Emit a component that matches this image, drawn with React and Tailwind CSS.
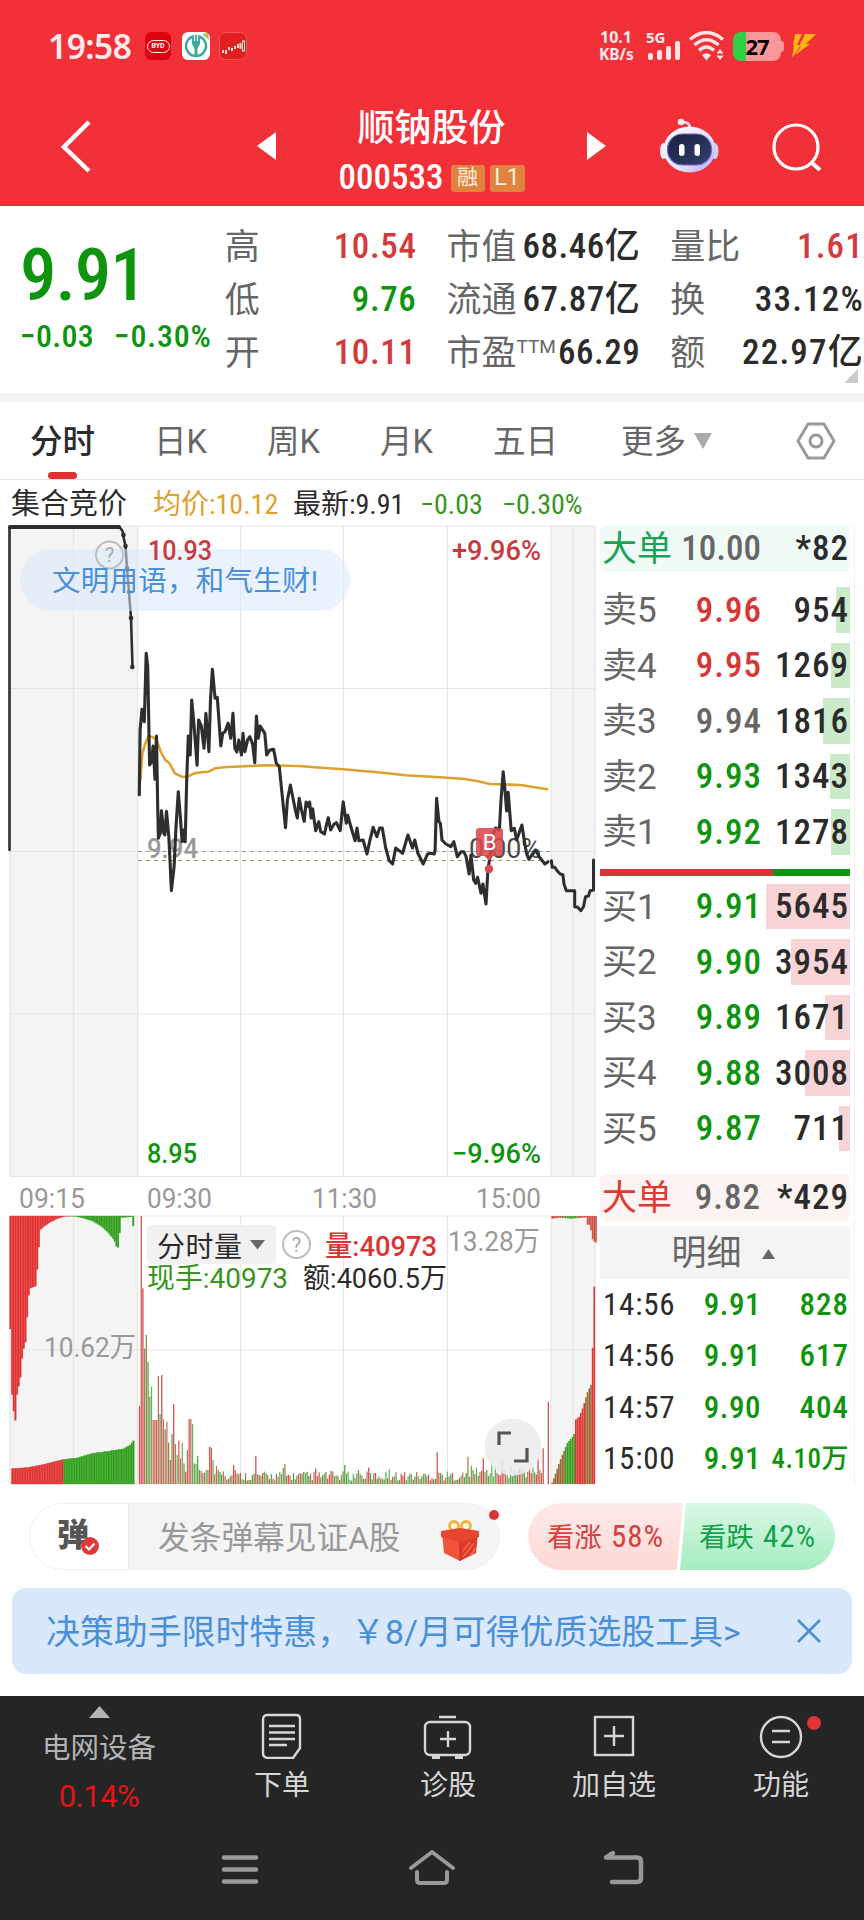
import React from 'react';

// --- DATA ---

const quoteColumns = [
    {
        box: 'w-[192px]',
        spacing: 'tracking-[0.6px]',
        rows: [
            { label: '高', value: '10.54', color: 'text-[#d23a3c]' },
            { label: '低', value: '9.76', color: 'text-[#0f940f]' },
            { label: '开', value: '10.11', color: 'text-[#d23a3c]' },
        ],
    },
    {
        box: 'ml-[30px] w-[194px]',
        spacing: 'tracking-[0.5px]',
        rows: [
            { label: '市值', value: '68.46亿', color: 'text-[#2b2b2b]' },
            { label: '流通', value: '67.87亿', color: 'text-[#2b2b2b]' },
            { label: '市盈', sup: 'TTM', value: '66.29', color: 'text-[#2b2b2b]' },
        ],
    },
    {
        box: 'ml-[30px] w-[194px]',
        spacing: 'tracking-[1.2px]',
        rows: [
            { label: '量比', value: '1.61', color: 'text-[#d23a3c]' },
            { label: '换', value: '33.12%', color: 'text-[#2b2b2b]' },
            { label: '额', value: '22.97亿', color: 'text-[#2b2b2b]' },
        ],
    },
];

const RED = 'text-[#d93534]';
const GREEN = 'text-[#0f940f]';
const GRAY = 'text-[#666]';

const sells = [
    { label: '卖5', price: '9.96', color: RED, amount: '954', bar: 14 },
    { label: '卖4', price: '9.95', color: RED, amount: '1269', bar: 19 },
    { label: '卖3', price: '9.94', color: GRAY, amount: '1816', bar: 27 },
    { label: '卖2', price: '9.93', color: GREEN, amount: '1343', bar: 20 },
    { label: '卖1', price: '9.92', color: GREEN, amount: '1278', bar: 19 },
];

const buys = [
    { label: '买1', price: '9.91', color: GREEN, amount: '5645', bar: 84 },
    { label: '买2', price: '9.90', color: GREEN, amount: '3954', bar: 59 },
    { label: '买3', price: '9.89', color: GREEN, amount: '1671', bar: 25 },
    { label: '买4', price: '9.88', color: GREEN, amount: '3008', bar: 45 },
    { label: '买5', price: '9.87', color: GREEN, amount: '711', bar: 11 },
];

const ticks = [
    { time: '14:56', price: '9.91', amount: '828' },
    { time: '14:56', price: '9.91', amount: '617' },
    { time: '14:57', price: '9.90', amount: '404' },
    { time: '15:00', price: '9.91', amount: '4.10万', small: true },
];

// Chart samples are stored in a 1568-wide space, KX / KY bring them to pixels
const KX = 600 / 1568;
const KY = 1 / 3;

const priceLine = [
    364,524, 366,330, 371,268, 377,305, 382,100, 386,140, 391,435, 396,425, 400,378, 405,478, 409,348, 412,560,
    414,655, 419,640, 422,572, 428,640, 431,645, 435,574, 441,650, 445,740, 448,812, 455,740, 460,620, 466,515,
    472,600, 476,665, 480,630, 484,665, 488,480, 492,348, 497,405, 501,240, 506,300, 515,436, 519,300, 526,318,
    533,385, 538,280, 546,395, 550,240, 555,148, 562,235, 568,232, 577,378, 582,340, 588,335, 596,310, 603,355,
    609,280, 614,385, 619,396, 624,360, 631,405, 635,340, 640,395, 647,360, 653,350, 660,372, 666,428, 670,288,
    675,355, 680,318, 692,340, 697,405, 705,390, 715,388, 722,430, 730,440, 737,520, 746,623, 751,540, 759,495,
    765,530, 771,565, 777,594, 782,535, 788,570, 795,604, 800,546, 807,560, 809,546, 813,594, 817,566, 825,632,
    833,605, 838,635, 848,642, 853,615, 858,593, 864,630, 873,612, 879,608, 889,632, 897,545, 905,610, 909,586,
    918,625, 928,662, 933,624, 938,662, 949,660, 959,702, 966,665, 975,622, 985,650, 992,624, 999,624, 1008,684,
    1017,722, 1026,732, 1034,684, 1052,700, 1066,645, 1078,684, 1084,660, 1092,700, 1106,732, 1117,703, 1124,700,
    1135,702, 1137,690, 1141,535, 1147,605, 1151,610, 1155,660, 1165,672, 1178,680, 1186,665, 1195,710, 1205,695,
    1212,695, 1218,710, 1226,762, 1231,705, 1238,780, 1243,790, 1248,772, 1257,820, 1262,792, 1270,852, 1275,750,
    1290,640, 1295,624, 1305,630, 1309,545, 1315,455, 1320,515, 1324,573, 1328,517, 1336,632, 1344,625, 1350,660,
    1364,615, 1370,660, 1376,700, 1382,718, 1390,705, 1400,690, 1410,712, 1424,732, 1432,725,
];

const averageLine = [
    367,480, 372,400, 380,370, 388,348, 400,352, 410,362, 420,395, 432,420, 443,430, 457,460, 475,470, 490,470,
    508,460, 530,456, 545,455, 562,445, 585,442, 640,439, 700,436, 780,438, 840,443, 897,448, 1000,458, 1060,466,
    1150,472, 1215,477, 1250,484, 1280,492, 1360,495, 1430,508,
];

const closingLine = [
    1441,722, 1443,742, 1450,742, 1456,752, 1464,762, 1471,764, 1474,792, 1480,812, 1502,812, 1502,860, 1510,862,
    1518,872, 1525,860, 1530,830, 1538,828, 1542,812, 1551,810, 1551,720,
];

const toPoints = (list, top) => {
    const out = [];
    for (let i = 0; i < list.length; i += 2) {
        out.push(`${(list[i] * KX).toFixed(1)},${(top + list[i + 1] * KY).toFixed(1)}`);
    }
    return out.join(' ');
};

// Linear interpolation through [x, y] pairs
const sample = (pairs, x) => {
    for (let i = 1; i < pairs.length; i++) {
        const [x0, y0] = pairs[i - 1];
        const [x1, y1] = pairs[i];
        if (x <= x1) return y0 + ((y1 - y0) * (x - x0)) / (x1 - x0 || 1);
    }
    return pairs[pairs.length - 1][1];
};

const auctionTop = [[25, 627], [30, 850], [40, 912], [43, 810], [50, 790], [57, 700], [66, 660], [71, 545], [76, 505], [92, 498], [98, 410], [103, 330], [112, 320], [130, 306], [150, 295], [168, 289], [195, 289], [215, 294], [240, 303], [262, 318], [280, 337], [297, 360], [300, 378], [310, 384], [312, 293], [344, 290], [346, 318], [350, 318]];
const auctionBottom = [[30, 1046], [70, 1043], [110, 1034], [165, 1018], [200, 1014], [240, 1000], [280, 994], [320, 987], [338, 975], [350, 958]];
const closeBottom = [[1441, 1088], [1450, 1060], [1462, 1020], [1480, 970], [1498, 945], [1501, 900], [1512, 890], [1522, 860], [1532, 820], [1544, 790], [1545, 685], [1550, 680], [1551, 500], [1556, 500]];
const closeTop = [[1441, 296], [1460, 293], [1490, 296], [1530, 292], [1534, 318], [1540, 312], [1545, 355], [1553, 368]];

// Minute volume bars: known peaks, the rest is low background turnover
const peaks = {
    0: 858, 1: 288, 2: 505, 3: 685, 4: 645, 5: 725, 6: 830, 7: 800, 8: 900, 9: 900, 10: 900, 11: 768, 12: 882, 13: 765,
    14: 898, 15: 928, 16: 905, 17: 968, 18: 1020, 19: 942, 20: 852, 21: 972, 22: 1005, 23: 962, 24: 1015, 25: 968,
    26: 1030, 27: 1055, 28: 990, 29: 897, 30: 897, 31: 912, 32: 1030, 33: 1032, 34: 1008, 35: 1050, 36: 1052, 37: 1060,
    38: 1058, 39: 1050, 40: 1050, 41: 980, 42: 983, 43: 1020, 44: 1062, 45: 1038, 46: 1050, 47: 1056, 48: 1064, 49: 1054,
    50: 1068, 55: 1035, 56: 1050, 68: 1008, 85: 1032, 84: 1044, 103: 1045, 112: 1052, 120: 1035, 128: 1050, 134: 1043,
    146: 1048, 174: 997, 175: 1058, 192: 1010, 201: 1015, 206: 1030, 212: 1018, 217: 1036, 224: 1050, 233: 1015,
    236: 985, 237: 1092, 238: 1092, 239: 845,
};
const reds = [0, 1, 2, 13, 20, 27, 41, 42, 55, 68, 134, 174, 201, 212, 233, 239];
const barColors = ['#93834a', '#4ba344', '#d9524f', '#8b8a55', '#5fb556', '#c0705c'];

const volumeBars = Array.from({ length: 240 }, (_, i) => {
    const noise = Math.abs(Math.sin(i * 12.9898) * 43758.5453) % 1;
    const base = i > 192 ? 18 + noise * 38 : 10 + noise * 28;
    return {
        x: (363 + i * 4.47) * KX,
        y: 1120 + (peaks[i] ?? 1092 - base) * KY,
        color: reds.includes(i) ? '#d8484a' : barColors[Math.floor(noise * 97) % 6],
    };
});

const stripes = (from, to, pick) => {
    const out = [];
    for (let x = from; x < to; x += 4.4) out.push({ x: x * KX, ...pick(x) });
    return out;
};

const auctionBars = [
    ...stripes(25, 350, (x) => ({ y: 1216, h: (sample(auctionTop, x) - 288) * KY, color: x < 180 ? '#e23232' : '#32a01e' })),
    ...stripes(30, 350, (x) => {
        const y = 1120 + sample(auctionBottom, x) * KY;
        return { y, h: 1484 - y, color: x < 163 ? '#e23232' : '#32a01e' };
    }),
];

const closeBars = [
    ...stripes(1441, 1556, (x) => ({ y: 1216, h: (sample(closeTop, x) - 288) * KY, color: x > 1470 && x < 1510 ? '#4b9a2e' : '#cf4b3f' })),
    ...stripes(1441, 1554, (x) => {
        const y = 1120 + sample(closeBottom, x) * KY;
        let color = '#9a6a35';
        if (x > 1474 && x < 1500) color = '#32a01e';
        if (x >= 1500 && x < 1526) color = '#e23232';
        if (x > 1543) color = '#e23232';
        return { y, h: 1484 - y, color };
    }),
];

// --- ICONS ---

function Triangle({ className, points }) {
    return (
        <svg className={className} viewBox="0 0 20 20" preserveAspectRatio="none" fill="currentColor">
            <polygon points={points} />
        </svg>
    );
}

function Robot() {
    return (
        <svg className="h-[56px] w-[60px]" viewBox="0 0 60 56">
            <defs>
                <linearGradient id="shell" x1="0" y1="0" x2="1" y2="1">
                    <stop offset="0" stopColor="#ffffff" />
                    <stop offset=".6" stopColor="#e6e2fb" />
                    <stop offset="1" stopColor="#a9a4f4" />
                </linearGradient>
                <linearGradient id="visor" x1="0" y1="0" x2="1" y2="1">
                    <stop offset="0" stopColor="#18203f" />
                    <stop offset="1" stopColor="#33406b" />
                </linearGradient>
            </defs>
            <path d="M22 4.500 Q31 3 31 11" stroke="#f6dbe6" strokeWidth="2.500" fill="none" />
            <circle cx="22" cy="4" r="3.300" fill="#fde8ee" />
            <ellipse cx="4.500" cy="33" rx="3.500" ry="8" fill="#efeafd" />
            <ellipse cx="56" cy="33" rx="3.500" ry="8" fill="#d3cdf6" />
            <ellipse cx="30.500" cy="31.500" rx="26" ry="23" fill="url(#shell)" />
            <rect x="8.500" y="16" width="44" height="31" rx="15" fill="url(#visor)" stroke="#7a5fe0" strokeWidth="1.200" />
            <rect x="20" y="26" width="5.500" height="12" rx="2.700" fill="#fff" />
            <rect x="35.500" y="26" width="5.500" height="12" rx="2.700" fill="#fff" />
        </svg>
    );
}

function Wifi() {
    return (
        <svg className="h-[30px] w-[36px]" viewBox="0 0 36 30" fill="none" stroke="#ffe4e6" strokeWidth="3.400">
            <path d="M1 8.500 Q17.500 -5.500 34 8.500" />
            <path d="M5.500 14 Q17.500 3.500 29.500 14" />
            <path d="M10 19.500 Q17.500 12.500 25 19.500" />
            <path d="M13 24 Q17.500 20.500 22 24 L17.500 29.500 Z" fill="#ffe4e6" stroke="none" />
            <path d="M27.500 22.500 L31 18 L34.500 22.500 Z M27.500 24.500 L31 29 L34.500 24.500 Z" fill="#ffe4e6" stroke="none" />
        </svg>
    );
}

function Gift() {
    return (
        <svg className="h-[42px] w-[40px]" viewBox="0 0 40 42">
            <circle cx="14" cy="7" r="4.500" fill="#fff6e0" stroke="#f2b23c" strokeWidth="2.800" />
            <circle cx="26" cy="7" r="4.500" fill="#fff6e0" stroke="#f2b23c" strokeWidth="2.800" />
            <polygon points="2,14 20,20 20,42 4,34" fill="#f0553c" />
            <polygon points="38,14 20,20 20,42 36,34" fill="#dc3a2c" />
            <polygon points="1,12 20,9 39,12 39,18 20,23 1,18" fill="#e8452f" />
            <path d="M20 23 V42" stroke="#c32e22" />
            <path d="M23 38 L34 24 M23 32 L30 23 M30 37 L36 29" stroke="#f36b4e" strokeWidth="1.500" />
        </svg>
    );
}

// --- SECTIONS ---

function StatusBar() {
    return (
        <div className="flex h-[92px] items-center pr-[48px] pl-[48px] text-[#ffe9ea]">
            <div className="w-[97px] font-['Noto_Sans'] text-[33.500px] font-semibold tracking-[-0.500px]">19:58</div>
            <div className="flex h-[28px] w-[26px] items-center justify-center rounded-[6px] bg-[#e1000f]">
                <div className="flex h-[13px] w-[23px] items-center justify-center rounded-full border border-white text-[7px] font-bold text-white">BYD</div>
            </div>
            <svg className="ml-[11px] h-[28px] w-[28px]" viewBox="0 0 28 28">
                <rect width="28" height="28" rx="6" fill="#fff" />
                <path d="M20 2 L26 1 L27 8 Z" fill="#a7c94a" />
                <circle cx="14" cy="14" r="10" fill="none" stroke="#3fa9a0" strokeWidth="2.500" />
                <path d="M14 13 V25" stroke="#3fa9a0" strokeWidth="3" />
                <path d="M10 4 H18 V12 L15 17 H13 L10 12 Z" fill="#3fa9a0" />
                <path d="M12.500 3 V9 M15.500 3 V9" stroke="#fff" strokeWidth="1.200" />
            </svg>
            <svg className="ml-[9px] h-[28px] w-[28px]" viewBox="0 0 28 28">
                <rect x=".5" y=".5" width="27" height="27" rx="6" fill="#e0201f" stroke="#f0565a" />
                <path d="M4 18 V21 M7 18 V22 M10 15 V18 M13 16 V19 M16 14 V17 M19 12 V16 M21.500 11 V17" stroke="#ffd9d0" strokeWidth="2" />
                <rect x="23.500" y="9" width="2" height="10" fill="none" stroke="#ffd9d0" />
            </svg>
            <div className="ml-auto flex h-[30px] items-center">
                <div className="w-[47px] font-['Noto_Sans'] text-[16px] leading-[17px] font-bold">
                    <div className="pl-[1px]">10.1</div>
                    <div className="text-[15.500px]">KB/s</div>
                </div>
                <div className="relative h-[30px] w-[36px]">
                    <div className="absolute top-0 left-0 font-['Noto_Sans'] text-[15px] leading-[13px] font-bold">5G</div>
                    <svg className="h-[30px] w-[36px]" viewBox="0 0 36 30" fill="#ffe4e6">
                        <rect x="2" y="22" width="5" height="7" rx="2" />
                        <rect x="11" y="19" width="5" height="10" rx="2" />
                        <rect x="20" y="15" width="5" height="14" rx="2" />
                        <rect x="29" y="10" width="5" height="19" rx="2" />
                    </svg>
                </div>
                <div className="ml-[7px]">
                    <Wifi />
                </div>
                <div className="ml-[8px] flex h-[29px] w-[48px] items-center justify-center overflow-hidden rounded-[8px] bg-linear-to-r from-[#2fd046] from-27% to-[#fb979b] to-27% font-['Noto_Sans'] text-[22px] font-bold tracking-[-1px] text-black">
                    27
                </div>
                <div className="h-[11px] w-[3px] rounded-r-full bg-[#fb979b]" />
                <svg className="ml-[7px] h-[25px] w-[25px]" viewBox="0 0 25 25" fill="#ffb51a">
                    <path d="M4 0 H11 L6 11 L10 11 L1 24 L3 12 L2 11 Z" />
                    <path d="M14 0 H25 L15 10 H19 L4 21 L10 12.500 H8 Z" />
                </svg>
            </div>
        </div>
    );
}

function TitleBar() {
    return (
        <div className="flex h-[114px] items-center border-b-2 border-[#d8343a] pb-[4px] text-white">
            <svg className="ml-[60px] h-[54px] w-[32px]" viewBox="0 0 32 54" fill="none" stroke="#fff" strokeWidth="4.500">
                <path d="M29 3 L4 28 L29 52" />
            </svg>
            <Triangle className="ml-[165px] h-[28px] w-[19px]" points="20,0 20,20 0,10" />
            <div className="flex w-[311px] flex-col items-center pt-[10px]">
                <div className="text-[37px] leading-[44px] font-medium">顺钠股份</div>
                <div className="mt-[10px] flex items-center">
                    <span className="w-[112px] text-[35px] leading-[34px] font-medium font-stretch-[75%]">000533</span>
                    <span className="flex h-[27px] w-[34px] items-center justify-center rounded-[3px] bg-[#e0833f] text-[21px] text-[#fff0dc]">融</span>
                    <span className="ml-[5px] flex h-[27px] w-[35px] items-center justify-center rounded-[3px] bg-[#e0833f] text-[23px] text-[#fff0dc]">L1</span>
                </div>
            </div>
            <Triangle className="h-[28px] w-[19px]" points="0,0 20,10 0,20" />
            <div className="ml-[53px]">
                <Robot />
            </div>
            <svg className="ml-[52px] h-[52px] w-[52px]" viewBox="0 0 52 52" fill="none" stroke="#fff" strokeWidth="3.200">
                <circle cx="25" cy="27" r="22" />
                <path d="M40 42 L49 50" strokeWidth="4" />
            </svg>
        </div>
    );
}

function QuotePanel() {
    return (
        <section className="relative flex h-[187px] pt-[14px]">
            <div className="w-[225px] pl-[20px] font-medium text-[#0f940f] font-stretch-[75%]">
                <div className="mt-[19px] text-[73px] leading-[72px] tracking-[-1px]">9.91</div>
                <div className="mt-[5px] flex text-[32px] leading-[40px] whitespace-nowrap">
                    <span className="w-[94px] tracking-[0.3px]">−0.03</span>
                    <span className="tracking-[0.8px]">−0.30%</span>
                </div>
            </div>
            {quoteColumns.map((col, i) => (
                <div key={i} className={col.box}>
                    {col.rows.map((row) => (
                        <div key={row.label} className="flex h-[53px] items-center justify-between whitespace-nowrap">
                            <span className="flex pt-[4px] text-[35px] text-[#666]">
                                {row.label}
                                {row.sup && <sup className="top-[4px] text-[19px] leading-[30px]">{row.sup}</sup>}
                            </span>
                            <span className={`pt-[1px] text-[35px] font-medium font-stretch-[75%] ${col.spacing} ${row.color}`}>{row.value}</span>
                        </div>
                    ))}
                </div>
            ))}
            <Triangle className="absolute right-[6px] bottom-[10px] h-[14px] w-[14px] text-[#ccc]" points="20,0 20,20 0,20" />
        </section>
    );
}

function ChartTabs() {
    return (
        <nav className="flex h-[78px] items-center border-b border-[#e4e4e4] pl-[30px] text-[32.500px] text-[#666]">
            <div className="relative flex h-full w-[124px] items-center pt-[4px] font-medium text-[#2b2b2b]">
                分时
                <span className="absolute bottom-0 left-[18px] h-[7px] w-[29px] rounded-full bg-[#df3032]" />
            </div>
            <div className="w-[113px] pt-[4px]">日K</div>
            <div className="w-[113px] pt-[4px]">周K</div>
            <div className="w-[113px] pt-[4px]">月K</div>
            <div className="w-[128px] pt-[4px]">五日</div>
            <div className="w-[73px] pt-[4px]">更多</div>
            <Triangle className="h-[16px] w-[18px] text-[#aaa]" points="0,0 20,0 10,20" />
            <svg className="ml-[84px] h-[38px] w-[40px]" viewBox="0 0 40 38" fill="none" stroke="#999" strokeWidth="3">
                <path d="M12 2 H28 L38 19 L28 36 H12 L2 19 Z" strokeLinejoin="round" />
                <circle cx="20" cy="19" r="6" />
            </svg>
        </nav>
    );
}

function InfoLine() {
    return (
        <div className="flex h-[46px] items-center pt-[3px] pl-[11px] text-[28px] whitespace-nowrap text-[#2b2b2b] font-stretch-[75%]">
            <span className="w-[142px] text-[29px]">集合竞价</span>
            <span className="w-[140px] text-[#dfa02c]">均价:10.12</span>
            <span className="w-[127px]">最新:9.91</span>
            <span className="w-[82px] text-[#35951d]">−0.03</span>
            <span className="text-[#35951d]">−0.30%</span>
        </div>
    );
}

function Charts() {
    return (
        <svg className="h-[962px] w-[600px] shrink-0" viewBox="0 525 600 962" fontFamily="Roboto, 'Noto Sans CJK SC', sans-serif">
            {/* auction areas */}
            <rect x="10" y="526" width="128" height="650" fill="#f4f4f4" />
            <rect x="551" y="526" width="44" height="650" fill="#f4f4f4" />
            <rect x="10" y="1216" width="128" height="268" fill="#f4f4f4" />
            <rect x="551" y="1216" width="44" height="268" fill="#f4f4f4" />
            {/* grid */}
            <g stroke="#e4e4e4" strokeWidth="1.200">
                {[10, 73.5, 137.5, 240.5, 343.5, 447.5, 551, 573, 595].map((x) => (
                    <path key={x} d={`M${x} 526 V1176 M${x} 1216 V1484`} />
                ))}
                {[526, 688.5, 851.5, 1014, 1176.5, 1216, 1350, 1484].map((y) => (
                    <path key={y} d={`M10 ${y} H595`} />
                ))}
            </g>
            <path d="M138 851.500 H551" stroke="#999" strokeWidth="1.200" strokeDasharray="4 4" />
            <path d="M138 860.500 H545" stroke="#a8925a" strokeWidth="1.200" strokeDasharray="4 4" />

            <g fontSize="28">
                <text x="147" y="858" fill="#999" fontWeight="500" textLength="51" lengthAdjust="spacingAndGlyphs">9.94</text>
                <text x="469" y="858" fill="#4a4a4a" textLength="72" lengthAdjust="spacingAndGlyphs">0.00%</text>
            </g>

            {/* price lines */}
            <g fill="none" strokeLinejoin="round" strokeLinecap="round">
                <polyline points={toPoints(averageLine, 620)} stroke="#dba22f" strokeWidth="2.600" />
                <polyline points="9.500,850 9.500,527 119.500,527 122.500,531 123.500,537 125.500,546 127,568 129,592 131,618 132.500,667" stroke="#2e2e2e" strokeWidth="2.600" />
                <path d="M10 527 H119" stroke="#2e2e2e" strokeWidth="4" />
                <polyline points={toPoints(priceLine, 620)} stroke="#2e2e2e" strokeWidth="3.100" />
                <polyline points={toPoints(closingLine, 620)} stroke="#2e2e2e" strokeWidth="3" />
            </g>
            {[[123.5, 535], [125.5, 546], [127, 568], [129, 592], [131, 618], [132.3, 667]].map(([x, y]) => (
                <circle key={y} cx={x} cy={y} r="2.300" fill="#2e2e2e" />
            ))}

            {/* buy marker */}
            <rect x="476" y="828" width="27" height="28" rx="3" fill="#d9494c" opacity=".88" />
            <path d="M484 855 H494 L489 861 Z" fill="#d9494c" />
            <circle cx="489" cy="869" r="4.200" fill="#d9494c" />
            <text x="489.500" y="850" fontSize="22" fill="#fff" textAnchor="middle">B</text>

            {/* notice bubble */}
            <rect x="20" y="549" width="330" height="62" rx="31" fill="#d9e8fd" opacity=".55" />
            <circle cx="109.500" cy="555" r="13.500" fill="none" stroke="#bdbdc2" strokeWidth="2" />
            <text x="109.500" y="562" fontSize="20" fill="#aaa" textAnchor="middle">?</text>
            <text x="52" y="591" fontSize="28.500" fill="#4a90d9" textLength="266">文明用语，和气生财!</text>

            {/* axis labels */}
            <g fontSize="28" fontWeight="500">
                <text x="148" y="560" fill="#c93a3c" textLength="64" lengthAdjust="spacingAndGlyphs">10.93</text>
                <text x="452" y="560" fill="#c93a3c" textLength="89" lengthAdjust="spacingAndGlyphs">+9.96%</text>
                <text x="147" y="1163" fill="#0f940f" textLength="50" lengthAdjust="spacingAndGlyphs">8.95</text>
                <text x="452" y="1163" fill="#0f940f" textLength="89" lengthAdjust="spacingAndGlyphs">−9.96%</text>
            </g>
            <g fontSize="28.500" fill="#999">
                <text x="19" y="1207.500" textLength="66" lengthAdjust="spacingAndGlyphs">09:15</text>
                <text x="147" y="1207.500" textLength="65" lengthAdjust="spacingAndGlyphs">09:30</text>
                <text x="312" y="1207.500" textLength="65" lengthAdjust="spacingAndGlyphs">11:30</text>
                <text x="476" y="1207.500" textLength="65" lengthAdjust="spacingAndGlyphs">15:00</text>
            </g>

            {/* volume */}
            {auctionBars.map((b, i) => (
                <rect key={i} x={b.x} y={b.y} width="1.550" height={b.h} fill={b.color} stroke={b.color} strokeOpacity=".75" strokeWidth=".4" />
            ))}
            {closeBars.map((b, i) => (
                <rect key={i} x={b.x} y={b.y} width="1.600" height={b.h} fill={b.color} />
            ))}
            {volumeBars.map((b, i) => (
                <rect key={i} x={b.x} y={b.y} width="1.250" height={1484 - b.y} fill={b.color} />
            ))}

            <rect x="147" y="1225" width="129" height="39" rx="4" fill="#f1f1f1" />
            <text x="157" y="1257" fontSize="28" fill="#2b2b2b" textLength="85">分时量</text>
            <polygon points="250,1240 265,1240 257.500,1249.500" fill="#666" />
            <circle cx="296.500" cy="1244.500" r="13.500" fill="none" stroke="#bdbdbd" strokeWidth="2" />
            <text x="296.500" y="1252" fontSize="20" fill="#aaa" textAnchor="middle">?</text>
            <g fontSize="28">
                <text x="325" y="1256" fill="#d93534" fontWeight="500" textLength="112" lengthAdjust="spacingAndGlyphs">量:40973</text>
                <text x="448" y="1251" fill="#999" textLength="92" lengthAdjust="spacingAndGlyphs">13.28万</text>
                <text x="147" y="1288" fill="#35951d" textLength="141" lengthAdjust="spacingAndGlyphs">现手:40973</text>
                <text x="303" y="1288" fill="#2b2b2b" textLength="144" lengthAdjust="spacingAndGlyphs">额:4060.5万</text>
                <text x="44" y="1357" fill="#999" textLength="92" lengthAdjust="spacingAndGlyphs">10.62万</text>
            </g>

            {/* fullscreen */}
            <circle cx="513" cy="1447" r="28.500" fill="#ececec" opacity=".88" />
            <path d="M499 1445 V1433 H511 M514 1461 H527 V1448" fill="none" stroke="#555" strokeWidth="3.200" />
        </svg>
    );
}

function BigOrder({ box, label, price, amount, spacing }) {
    return (
        <div className={`flex h-[47px] items-center rounded-[6px] pr-[1px] pl-[2px] ${box}`}>
            <span className="w-[78px] pt-[3px] text-[35px]">{label}</span>
            <span className={`w-[81px] pt-[1px] text-right text-[35px] font-medium text-[#666] font-stretch-[75%] ${spacing}`}>{price}</span>
            <span className="ml-auto pt-[1px] text-[35px] font-medium tracking-[1px] text-[#2b2b2b] font-stretch-[75%]">*{amount}</span>
        </div>
    );
}

function BookRow({ row, tint }) {
    return (
        <div className="relative flex h-[45.500px] items-center pr-[1px] pl-[2px]">
            <span className={`absolute top-0 right-0 h-full ${tint}`} style={{ width: row.bar }} />
            <span className="w-[78px] pt-[3px] text-[35px] text-[#666]">{row.label}</span>
            <span className={`w-[82px] pt-[2px] text-right text-[35px] font-medium tracking-[1px] font-stretch-[75%] ${row.color}`}>{row.price}</span>
            <span className="relative ml-auto pt-[2px] text-[35px] font-medium tracking-[1px] text-[#2b2b2b] font-stretch-[75%]">{row.amount}</span>
        </div>
    );
}

function OrderBook() {
    return (
        <aside className="h-[960px] w-[255px] border-r border-[#f1f1f1] pr-[4px]">
            <BigOrder box="bg-[#f1fbf6] text-[#1ba25a]" label="大单" price="10.00" amount="82" spacing="tracking-normal" />
            <div className="mt-[15px] flex flex-col gap-[10px]">
                {sells.map((row) => (
                    <BookRow key={row.label} row={row} tint="bg-[#cbeac9]" />
                ))}
            </div>
            <div className="mt-[14px] flex h-[7px]">
                <div className="w-[173px] bg-[#d93534]" />
                <div className="grow bg-[#0f940f]" />
            </div>
            <div className="mt-[8px] flex flex-col gap-[10px]">
                {buys.map((row) => (
                    <BookRow key={row.label} row={row} tint="bg-[#f9d4d6]" />
                ))}
            </div>
            <div className="mt-[23px]">
                <BigOrder box="bg-[#fdf3f2] text-[#e0392f]" label="大单" price="9.82" amount="429" spacing="tracking-[1px]" />
            </div>
            <div className="mt-[5px] flex h-[53px] items-center justify-center bg-[#f4f4f4] pt-[3px] pr-[4px] text-[35px] text-[#666]">
                明细
                <Triangle className="ml-[20px] h-[10px] w-[13px]" points="0,20 20,20 10,0" />
            </div>
            {ticks.map((tick, i) => (
                <div key={i} className="flex h-[51.500px] items-center pr-[1px] pl-[3px] font-medium font-stretch-[75%]">
                    <span className="w-[76px] text-[31px] font-normal tracking-[0.8px] text-[#2b2b2b]">{tick.time}</span>
                    <span className="w-[82px] text-right text-[31px] tracking-[0.500px] text-[#0f940f]">{tick.price}</span>
                    <span className={`ml-auto text-[#0f940f] ${tick.small ? 'text-[27px] tracking-[0.500px]' : 'text-[31px] tracking-[1px]'}`}>{tick.amount}</span>
                </div>
            ))}
        </aside>
    );
}

function DanmuBar() {
    return (
        <div className="mt-[16px] flex h-[67px]">
            <div className="relative ml-[29px] flex w-[471px] items-center rounded-full border border-[#f0f0f0] bg-[#f4f4f4]">
                <div className="relative flex h-full w-[99px] items-center rounded-l-full border-r border-[#ececec] bg-white pb-[3px] pl-[27px] text-[32px] font-black text-[#555]">
                    弹
                    <svg className="absolute top-[33px] left-[51px] h-[18px] w-[18px]" viewBox="0 0 18 18">
                        <circle cx="9" cy="9" r="9" fill="#e03a36" />
                        <path d="M4.500 9 L8 12.500 L13.500 6.500" fill="none" stroke="#fff" strokeWidth="2.200" />
                    </svg>
                </div>
                <span className="ml-[29px] w-[282px] pt-[4px] text-[31.700px] text-[#999]">发条弹幕见证A股</span>
                <div className="pt-[6px]">
                    <Gift />
                </div>
                <span className="absolute top-[6px] right-0 h-[10px] w-[10px] rounded-full bg-[#d93534]" />
            </div>
            <div className="ml-[28px] flex w-[155px] items-center justify-center gap-[9px] rounded-l-full bg-linear-to-b from-[#fdeae9] to-[#fdd9d5] text-[27.500px] whitespace-nowrap text-[#d6403d] [clip-path:polygon(0_0,100%_0,96%_100%,0_100%)]">
                <span className="pt-[3px]">看涨</span>
                <span className="pt-[1px] text-[31px] tracking-[1px] font-stretch-[75%]">58%</span>
            </div>
            <div className="-ml-[3px] flex w-[155px] items-center justify-center gap-[9px] rounded-r-full bg-linear-to-b from-[#d8f8e5] to-[#a5ecbf] text-[27.500px] whitespace-nowrap text-[#17a04f] [clip-path:polygon(4%_0,100%_0,100%_100%,0_100%)]">
                <span className="pt-[3px]">看跌</span>
                <span className="pt-[1px] text-[31px] tracking-[1px] font-stretch-[75%]">42%</span>
            </div>
        </div>
    );
}

function Banner() {
    return (
        <div className="mx-[12px] mt-[18px] flex h-[86px] items-center rounded-[14px] bg-[#d9e8fb] pl-[34px] text-[33.900px] whitespace-nowrap text-[#4a90d9]">
            <span className="w-[751px] pt-[5px]">决策助手限时特惠，￥8/月可得优质选股工具&gt;</span>
            <svg className="h-[24px] w-[24px] shrink-0" viewBox="0 0 24 24" stroke="currentColor" strokeWidth="2.600">
                <path d="M1 1 L23 23 M23 1 L1 23" />
            </svg>
        </div>
    );
}

function Action({ box, label, children }) {
    return (
        <div className={`flex flex-col items-center pt-[15px] text-[28px] leading-[38px] text-[#d6d6d6] ${box}`}>
            <svg className="mb-[8px] h-[48px] w-[50px]" viewBox="0 0 50 48" fill="none" stroke="#d6d6d6" strokeWidth="2.400">
                {children}
            </svg>
            {label}
        </div>
    );
}

function BottomBar() {
    return (
        <footer className="mt-[22px] h-[225px] bg-[#252525]">
            <div className="flex h-[130px]">
                <div className="flex w-[198px] flex-col items-center pt-[10px] text-[28.500px] text-[#b4b4b4]">
                    <Triangle className="h-[12px] w-[21px]" points="0,20 20,20 10,0" />
                    <span className="mt-[10px] leading-[42px]">电网设备</span>
                    <span className="mt-[6px] text-[31px] leading-[42px] tracking-[-0.500px] text-[#e21414]">0.14%</span>
                </div>
                <Action box="w-[168px]" label="下单">
                    <path d="M10 4 H39 Q43 4 43 8 V37 L36 47 H11 Q6 47 6 42 V9 Q6 4 10 4 Z" />
                    <path d="M12 15 H38 M12 21.500 H38 M12 28 H38 M12 34 H30" />
                </Action>
                <Action box="w-[164px]" label="诊股">
                    <rect x="2" y="11" width="45" height="33" rx="5" />
                    <path d="M16 6 H33 M25 20 V36 M17 28 H33" />
                    <path d="M9 46 H17 M32 46 H40" strokeWidth="4" />
                </Action>
                <Action box="w-[168px]" label="加自选">
                    <rect x="6" y="6" width="38" height="38" />
                    <path d="M25 15 V35 M15 25 H35" />
                </Action>
                <div className="relative w-[166px]">
                    <Action box="w-full" label="功能">
                        <circle cx="25" cy="26" r="20" />
                        <path d="M16 20 H34 M16 31 H34" />
                    </Action>
                    <span className="absolute top-[20px] right-[43px] h-[14px] w-[14px] rounded-full bg-[#e03434]" />
                </div>
            </div>
            <div className="flex items-center justify-between px-[216px] pt-[18px]">
                <svg className="h-[48px] w-[48px]" viewBox="0 0 48 48" stroke="#999" strokeWidth="4.500" strokeLinecap="round">
                    <path d="M8 13.500 H40 M8 25.500 H40 M8 37.500 H40" />
                </svg>
                <svg className="h-[48px] w-[48px]" viewBox="0 0 48 48" fill="none" stroke="#999" strokeWidth="4" strokeLinecap="round" strokeLinejoin="round">
                    <path d="M3 24 L24 8 L45 24 M9 28 V36 Q9 39 12 39 H36 Q39 39 39 36 V28" />
                </svg>
                <svg className="h-[48px] w-[48px]" viewBox="0 0 48 48" fill="none" stroke="#999" strokeWidth="4.500" strokeLinecap="round" strokeLinejoin="round">
                    <path d="M13 9 L6 13.500 H37 Q41 13.500 41 17.500 V34 Q41 38 37 38 H12" />
                </svg>
            </div>
        </footer>
    );
}

export default function App() {
    return (
        <div className="h-[1920px] w-[864px] overflow-hidden bg-white font-['Roboto','Noto_Sans_CJK_SC',sans-serif]">
            <header className="bg-[#f23038]">
                <StatusBar />
                <TitleBar />
            </header>
            <QuotePanel />
            <div className="h-[9px] bg-[#f4f4f4]" />
            <ChartTabs />
            <InfoLine />
            <main className="-mt-[1px] flex">
                <Charts />
                <OrderBook />
            </main>
            <DanmuBar />
            <Banner />
            <BottomBar />
        </div>
    );
}
